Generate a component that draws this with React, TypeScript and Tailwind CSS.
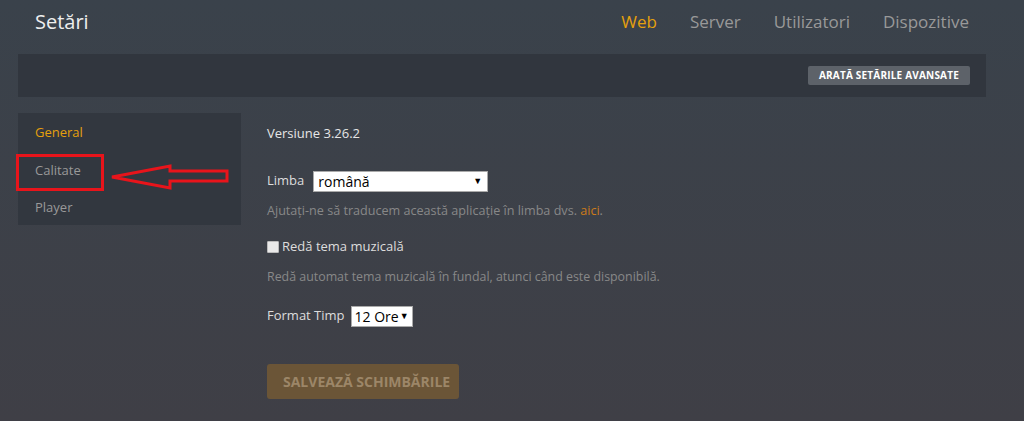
import React from "react";

const App = () => {
  const tabs = [
    { name: "Web", active: true },
    { name: "Server" },
    { name: "Utilizatori" },
    { name: "Dispozitive" },
  ];
  const menu = ["General", "Calitate", "Player"];

  return (
    <div
      className="w-[1024px] h-[421px] overflow-hidden bg-gradient-to-b from-[#3a424b] to-[#3f3f46] text-[#dddddd]"
      style={{ fontFamily: '"Open Sans", "Noto Sans", sans-serif' }}
    >
      {/* Header */}
      <div className="flex items-center justify-between h-[54px] pl-[35px] pr-[55px]">
        <h1 className="text-[20px] text-[#eeeeee] -mt-[10px]">Setări</h1>
        <div className="flex gap-[33px] text-[17px] -mt-[10px]">
          {tabs.map((t) => (
            <span key={t.name} className={t.active ? "text-[#e5a00d]" : "text-[#999999]"}>
              {t.name}
            </span>
          ))}
        </div>
      </div>

      {/* Toolbar */}
      <div className="ml-[18px] w-[968px] h-[43px] bg-[#31363e] flex items-center justify-end pr-[16px]">
        <button className="h-[19px] px-[11px] rounded-[2px] bg-[#5d6269] text-white text-[10px] font-bold tracking-[0.2px]">
          ARATĂ SETĂRILE AVANSATE
        </button>
      </div>

      {/* Body */}
      <div className="flex mt-[16px] ml-[18px]">
        <div className="relative w-[223px] h-[112px] bg-[#32373f] flex flex-col pt-[9px] pl-[17px] text-[13px]">
          {menu.map((m, i) => (
            <div key={m} className={`shrink-0 h-[37.5px] leading-[20px] ${i === 0 ? "text-[#e5a00d]" : "text-[#999999]"}`}>
              {m}
            </div>
          ))}
          {/* annotation: red box */}
          <div className="absolute left-[-2px] top-[41px] w-[88px] h-[37px] border-[3px] border-[#e8141b]" />
          {/* annotation: arrow */}
          <svg className="absolute left-[90px] top-[48px]" width="125" height="30" viewBox="0 0 125 30">
            <polygon
              points="4,16 62,5 62,10 119,10 119,20 62,20 62,27"
              fill="none"
              stroke="#e8141b"
              strokeWidth="3"
              strokeLinejoin="miter"
            />
          </svg>
        </div>

        <div className="ml-[26px] flex flex-col text-[13px]">
          <div className="mt-[11px] text-[#e6e6e6]">Versiune 3.26.2</div>

          <div className="flex items-center mt-[27px]">
            <span className="text-[#dddddd] mr-[9px]">Limba</span>
            <div className="w-[175px] h-[21px] bg-white border border-[#aaaaaa] flex items-center justify-between px-[4px] text-black text-[14px]">
              <span>română</span>
              <span className="text-[9px] mr-[1px]">▼</span>
            </div>
          </div>
          <div className="mt-[10px] text-[12.6px] text-[#888888]">
            Ajutați-ne să traducem această aplicație în limba dvs. <span className="text-[#cc7b19]">aici</span>.
          </div>

          <div className="flex items-center mt-[17px]">
            <span className="w-[12px] h-[12px] bg-[#e9e9e9] border border-[#bbbbbb] rounded-[1px] mr-[3px]" />
            <span className="text-[#dddddd]">Redă tema muzicală</span>
          </div>
          <div className="mt-[11px] text-[12.4px] text-[#888888]">
            Redă automat tema muzicală în fundal, atunci când este disponibilă.
          </div>

          <div className="flex items-center mt-[19px]">
            <span className="text-[#dddddd] mr-[6px]">Format Timp</span>
            <div className="w-[62px] h-[21px] bg-white border border-[#aaaaaa] flex items-center justify-between px-[3px] text-black text-[14px] whitespace-nowrap">
              <span>12 Ore</span>
              <span className="text-[9px]">▼</span>
            </div>
          </div>

          <button className="mt-[37px] w-[192px] h-[35px] rounded-[3px] bg-[#6b5537] text-[#9c8668] text-[14px] font-bold text-left pl-[16px]">
            SALVEAZĂ SCHIMBĂRILE
          </button>
        </div>
      </div>
    </div>
  );
};

export default App;
